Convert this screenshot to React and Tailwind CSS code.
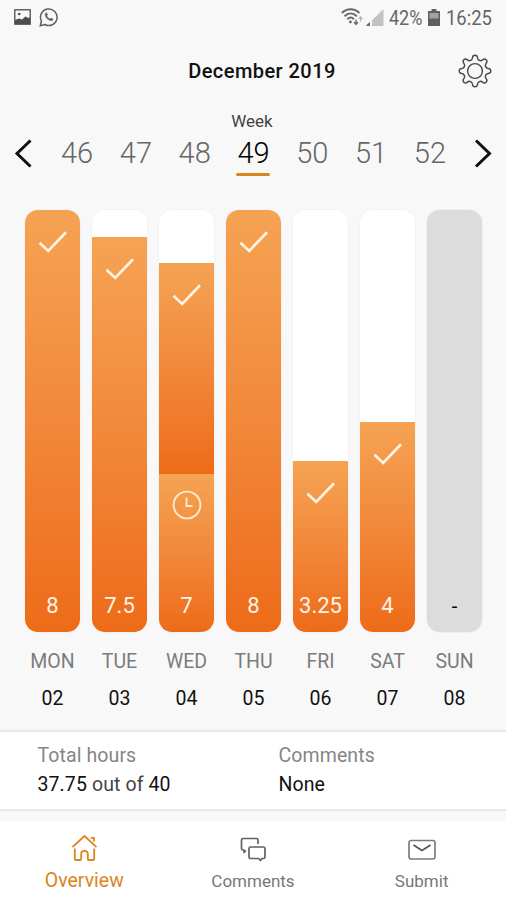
import React, { useState } from 'react';

// Hours per day, each fill has its top offset (px) inside the 422px column
const days = [
  { name: 'MON', date: '02', hours: '8', top: 0 },
  { name: 'TUE', date: '03', hours: '7.5', top: 27 },
  { name: 'WED', date: '04', hours: '7', top: 53, pending: 158 },
  { name: 'THU', date: '05', hours: '8', top: 0 },
  { name: 'FRI', date: '06', hours: '3.25', top: 251 },
  { name: 'SAT', date: '07', hours: '4', top: 212 },
  { name: 'SUN', date: '08', hours: '-', off: true },
];

const weeks = [46, 47, 48, 49, 50, 51, 52];

const CheckIcon = () => (
  <svg width="30" height="24" viewBox="0 0 30 24" fill="none" stroke="#fff4e4" strokeWidth="2.7">
    <path d="M1.5 11.7 L10.2 19.9 L28 1.2" />
  </svg>
);

const ClockIcon = () => (
  <svg width="30" height="30" viewBox="0 0 30 30" fill="none" stroke="#ffe9cc" strokeWidth="1.9">
    <circle cx="15" cy="15" r="13.4" />
    <path d="M14.5 7.5V16H20.5" />
  </svg>
);

const PictureIcon = () => (
  <svg width="17" height="16" viewBox="0 0 17 16">
    <rect x="0.8" y="0.8" width="15.4" height="14.4" fill="none" stroke="#4d4d4d" strokeWidth="1.3" />
    <path d="M1 11L5 9.5L8 10.5L11.5 7.5L14 9L16 8.5V15H1Z" fill="#4d4d4d" />
    <circle cx="5.2" cy="5" r="1.3" fill="#4d4d4d" />
  </svg>
);

const WhatsappIcon = () => (
  <svg width="20" height="20" viewBox="0 0 20 20" fill="none" stroke="#606060" strokeWidth="1.5">
    <path d="M1.3 18.7L2.4 14A8.3 8.3 0 1 1 5.8 17.5Z" />
    <path d="M6.4 6.3C5 9.5 10 15 13.6 13.3L14 12L12 11L11 12C9.5 11.5 8.2 10 7.8 8.8L8.6 7.8L7.7 5.9Z" fill="#606060" strokeWidth="0.5" />
  </svg>
);

const WifiIcon = () => (
  <svg width="22" height="18" viewBox="0 0 22 18" fill="none" stroke="#696969" strokeWidth="1.9">
    <path d="M0.8 5C6 0 13.2 0 18.4 5M3.5 8.2C7.3 4.6 12 4.6 15.8 8.2M6.3 11.2C8.5 9.1 10.8 9.1 13 11.2" />
    <circle cx="9.4" cy="14" r="1.4" fill="#696969" stroke="none" />
    <path d="M15 11.5V16M13 14L15 16.4L17 14" strokeWidth="1.3" />
    <path d="M19.6 13.5V9M17.8 11L19.6 9L21.4 11" stroke="#b5b5b5" strokeWidth="1.2" />
  </svg>
);

const SignalIcon = () => (
  <svg width="18" height="17" viewBox="0 0 18 17">
    <path d="M17.5 0V17H6V11.2Z" fill="#c2c2c2" />
    <path d="M4 13V17H0.5V16Z" fill="#666" />
  </svg>
);

const BatteryIcon = () => (
  <svg width="12" height="17" viewBox="0 0 12 17">
    <path d="M3.5 0H8.5V2H12V17H0V2H3.5Z" fill="#606060" />
    <path d="M1.5 4H10.5V9.5H1.5Z" fill="#a2a2a2" />
  </svg>
);

// Eight-tooth outline gear
const tooth = 'M12.6 6.4Q14.3 5.8 14.5 3.8Q14.7 1.2 17 1.2Q19.3 1.2 19.5 3.8Q19.7 5.8 21.4 6.4';

const GearIcon = () => (
  <svg width="34" height="34" viewBox="0 0 34 34" fill="none" stroke="#484848" strokeWidth="1.4" strokeLinecap="round">
    <circle cx="17" cy="17" r="7.4" />
    {[0, 45, 90, 135, 180, 225, 270, 315].map((angle) => (
      <path key={angle} d={tooth} transform={`rotate(${angle} 17 17)`} />
    ))}
  </svg>
);

const HomeIcon = () => (
  <svg width="28" height="28" viewBox="0 0 28 28" fill="none" stroke="currentColor" strokeWidth="1.8" strokeLinejoin="round">
    <path d="M2.5 13.2L14.5 2L26.5 13.2M20.8 3.8H24V7.6" />
    <path d="M4.8 14.5V25Q4.8 26 5.8 26H10.2Q11.2 26 11.2 25V19.8Q11.2 16.8 14.5 16.8Q17.8 16.8 17.8 19.8V25Q17.8 26 18.8 26H23.2Q24.2 26 24.2 25V14.5" />
  </svg>
);

const ChatIcon = () => (
  <svg width="28" height="26" viewBox="0 0 28 26" fill="none" stroke="#626262" strokeWidth="1.7" strokeLinejoin="round">
    <path d="M19 7V3Q19 1.5 17.5 1.5H4Q2.5 1.5 2.5 3V11.5Q2.5 13 4 13H5V15.5L7 13.5" />
    <path d="M11.5 10H24.5Q26 10 26 11.5V20Q26 21.5 24.5 21.5H23L21.5 23.5L19.5 21.5H11.5Q10 21.5 10 20V11.5Q10 10 11.5 10Z" />
  </svg>
);

const MailIcon = () => (
  <svg width="30" height="22" viewBox="0 0 30 22" fill="none" stroke="#7c7c7c" strokeWidth="1.7">
    <rect x="2" y="1.5" width="26" height="18.5" rx="2.2" />
    <path d="M6.5 6L15 11.5L23.5 6" stroke="#555" />
  </svg>
);

const DayBar = ({ day }) => (
  <div
    className={`relative h-[422px] w-[55px] overflow-hidden rounded-[13px] ring-1 ${
      day.off ? 'bg-[#dcdcdc] ring-[#f0f0f0]' : 'bg-white ring-[#f3f3f3]'
    }`}
  >
    {!day.off && (
      <div
        className="absolute inset-x-0 bottom-0 flex flex-col"
        style={{ height: 422 - day.top }}
      >
        <div className="flex flex-1 justify-center bg-linear-to-b from-[#f5a353] to-[#ed6b17] pt-[21px]">
          <CheckIcon />
        </div>
        {day.pending && (
          <div
            className="flex justify-center bg-linear-to-b from-[#f5a353] to-[#ed6b17] pt-[16px]"
            style={{ height: day.pending }}
          >
            <ClockIcon />
          </div>
        )}
      </div>
    )}
    <span
      className={`absolute inset-x-0 bottom-[12px] text-center leading-7 ${
        day.off ? 'text-[20px] text-black' : 'text-[22px] text-[#fff4e6]'
      }`}
    >
      {day.hours}
    </span>
  </div>
);

const App = () => {
  const [week, setWeek] = useState(49);

  return (
    <div className="flex h-[900px] w-[506px] flex-col overflow-hidden bg-[#f8f8f8] font-['Roboto',sans-serif]">
      {/* --- Status bar --- */}
      <div className="flex h-9 items-center justify-between pr-[14px] pl-[14px] text-[#666]">
        <div className="flex items-center gap-2 pb-[2px]">
          <PictureIcon />
          <WhatsappIcon />
        </div>
        <div className="flex items-center text-[20px] leading-6">
          <div className="mb-[2px]"><WifiIcon /></div>
          <div className="mb-[2px] ml-[3px]"><SignalIcon /></div>
          <span className="ml-[5px] w-[35px] origin-left scale-x-[0.9] whitespace-nowrap">42%</span>
          <div className="mb-[2px] ml-[4px]"><BatteryIcon /></div>
          <span className="ml-[6px] w-[46px] origin-left scale-x-[0.92] whitespace-nowrap">16:25</span>
        </div>
      </div>

      {/* --- Header --- */}
      <header className="grid h-[70px] grid-cols-[1fr_auto_1fr] items-center pr-[14px] pl-[32px]">
        <div />
        <h1 className="text-[20px] font-medium tracking-[0.45px] text-[#111]">December 2019</h1>
        <button className="justify-self-end"><GearIcon /></button>
      </header>

      {/* --- Week picker --- */}
      <div className="h-[103px] pt-[5px]">
        <p className="pr-[2px] text-center text-[17px] leading-5 text-[#444]">Week</p>
        <div className="flex items-start justify-between px-[14px] pt-[2px]">
          <button className="mt-[6px]" onClick={() => setWeek(Math.max(46, week - 1))}>
            <svg width="18" height="29" viewBox="0 0 18 29" fill="none" stroke="#111" strokeWidth="3">
              <path d="M16.5 1.5L3 14.5L16.5 27.5" />
            </svg>
          </button>
          <div className="flex">
            {weeks.map((w) => (
              <button key={w} onClick={() => setWeek(w)} className="flex w-[58.8px] flex-col items-center">
                <span className={`pl-[1px] text-[29px] leading-[40px] font-light ${w === week ? 'text-black' : 'text-[#666]'}`}>
                  {w}
                </span>
                {w === week && <span className="h-[3px] w-[34px] rounded-sm bg-[#d9861d]" />}
              </button>
            ))}
          </div>
          <button className="mt-[6px]" onClick={() => setWeek(Math.min(52, week + 1))}>
            <svg width="18" height="29" viewBox="0 0 18 29" fill="none" stroke="#111" strokeWidth="3">
              <path d="M2 1.5L15.5 14.5L2 27.5" />
            </svg>
          </button>
        </div>
      </div>

      {/* --- Day columns --- */}
      <div className="flex h-[521px] justify-between pt-[1px] pr-[24px] pl-[25px]">
        {days.map((day) => (
          <div key={day.name} className="flex w-[55px] flex-col items-center">
            <DayBar day={day} />
            <span className="mt-[18px] text-[19.5px] leading-6 text-[#7c7c7c]">{day.name}</span>
            <span className="mt-[13px] text-[19.5px] leading-6 text-[#111]">{day.date}</span>
          </div>
        ))}
      </div>

      {/* --- Totals --- */}
      <div className="grid h-[81px] grid-cols-[241px_1fr] border-y-2 border-[#e8e8e8] bg-white pt-[12px] pl-[37.5px] text-[19.5px] leading-6 text-[#111]">
        <div>
          <p className="tracking-[0.1px] text-[#858585]">Total hours</p>
          <p className="mt-[5px] tracking-[0.1px]">37.75 <span className="text-[#444]">out of</span> 40</p>
        </div>
        <div>
          <p className="tracking-[0.1px] text-[#858585]">Comments</p>
          <p className="mt-[5px] tracking-[0.1px]">None</p>
        </div>
      </div>

      {/* --- Bottom navigation --- */}
      <nav className="mt-[11px] grid flex-1 grid-cols-3 bg-white text-[#777]">
        <button className="flex flex-col items-center pt-[12px] text-[#dc851c]">
          <HomeIcon />
          <span className="mt-[7px] text-[19.5px] leading-6">Overview</span>
        </button>
        <button className="flex flex-col items-center pt-[15px] text-[17px]">
          <ChatIcon />
          <span className="mt-[6px] leading-6">Comments</span>
        </button>
        <button className="flex flex-col items-center pt-[17px] text-[17px]">
          <MailIcon />
          <span className="mt-[8px] leading-6">Submit</span>
        </button>
      </nav>
    </div>
  );
};

export default App;
